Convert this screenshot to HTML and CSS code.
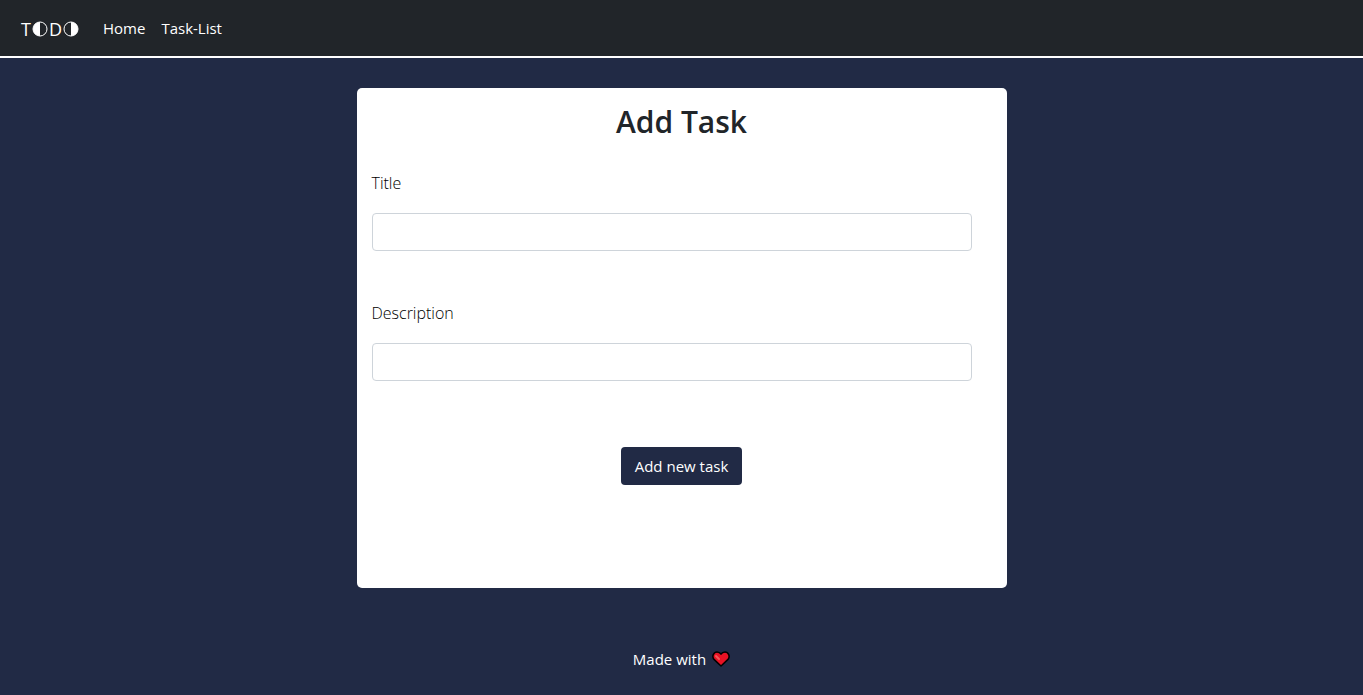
FILE: index.html
```html
<!DOCTYPE html>
<html lang="en">
<head>
<meta charset="utf-8">
<meta name="viewport" content="width=device-width, initial-scale=1">
<title>Add Task</title>
<link rel="stylesheet" href="styles.css">
</head>
<body>
<nav class="navbar">
  <a class="brand" href="#" aria-label="TODO">
    <span>T</span>
    <svg class="brand-o" viewBox="0 0 16 16" aria-hidden="true"><circle cx="8" cy="8" r="7" fill="none" stroke="#fff"/><path d="M8 1a7 7 0 0 0 0 14z" fill="#fff"/></svg>
    <span>D</span>
    <svg class="brand-o" viewBox="0 0 16 16" aria-hidden="true"><circle cx="8" cy="8" r="7" fill="none" stroke="#fff"/><path d="M8 1a7 7 0 0 1 0 14z" fill="#fff"/></svg>
  </a>
  <a class="nav-link" href="#">Home</a>
  <a class="nav-link" href="#">Task-List</a>
</nav>
<main class="page">
  <form class="card">
    <h1 class="card-title">Add Task</h1>
    <div class="field">
      <label class="field-label" for="title">Title</label>
      <input class="field-input" id="title" type="text">
    </div>
    <div class="field">
      <label class="field-label" for="description">Description</label>
      <input class="field-input" id="description" type="text">
    </div>
    <button class="submit" type="button">Add new task</button>
  </form>
</main>
<footer class="footer">
  <span>Made with</span>
  <svg class="heart" viewBox="0 0 18 16" role="img" aria-label="love"><path d="M9 15 2 8.400C-.4 5.500 1.500 1 5 1c1.800 0 3.200.8 4 2.200C9.800 1.800 11.200 1 13 1c3.500 0 5.400 4.500 3 7.400z" fill="#e81224" stroke="#000" stroke-width="1.500" stroke-linejoin="round"/><path d="M4 5 7 8" stroke="#f1585a" stroke-width="2" stroke-linecap="round"/></svg>
</footer>
</body>
</html>
```
FILE: styles.css
```css
* {
  box-sizing: border-box;
}

body {
  margin: 0;
  min-height: 100vh;
  background: #212a45;
  color: #212529;
  font: 400 16px/24px "Segoe UI", "Open Sans", "Noto Sans", sans-serif;
}

.navbar {
  display: flex;
  align-items: center;
  height: 58px;
  padding: 0 20px;
  background: #212529;
  border-bottom: 2px solid #fff;
}

.brand {
  display: flex;
  align-items: center;
  gap: 1px;
  margin-right: 16px;
  padding: 2px 0 0 1px;
  color: #fff;
  font-size: 18px;
  line-height: 30px;
  text-decoration: none;
}

.brand-o {
  width: 16px;
  height: 16px;
}

.nav-link {
  padding: 8px;
  color: #fff;
  font-size: 15px;
  text-decoration: none;
}

.page {
  padding: 30px 16px 0;
}

.card {
  display: flex;
  flex-direction: column;
  max-width: 650px;
  min-height: 500px;
  margin: 0 auto;
  padding: 15px;
  background: #fff;
  border-radius: 5px;
}

.card-title {
  margin: 0 0 30px;
  font-size: 30px;
  font-weight: 600;
  line-height: 38px;
  text-align: center;
}

.field {
  display: flex;
  flex-direction: column;
  gap: 18px;
  max-width: 600px;
  margin-bottom: 50px;
}

.field-label {
  color: #000;
  font-weight: 300;
}

.field-input {
  width: 100%;
  height: 38px;
  padding: 6px 12px;
  background: #fff;
  border: 1px solid #ced4da;
  border-radius: 4px;
  color: inherit;
  font: inherit;
}

.submit {
  align-self: center;
  margin-top: 16px;
  padding: 7px 14px;
  background: #212a45;
  border: 0;
  border-radius: 4px;
  color: #fff;
  font: inherit;
  font-size: 15px;
}

.footer {
  display: flex;
  justify-content: center;
  align-items: center;
  gap: 6px;
  padding: 59px 16px 24px;
  color: #fff;
  font-size: 15px;
}

.heart {
  width: 18px;
  height: 16px;
  fill: none;
}
```
